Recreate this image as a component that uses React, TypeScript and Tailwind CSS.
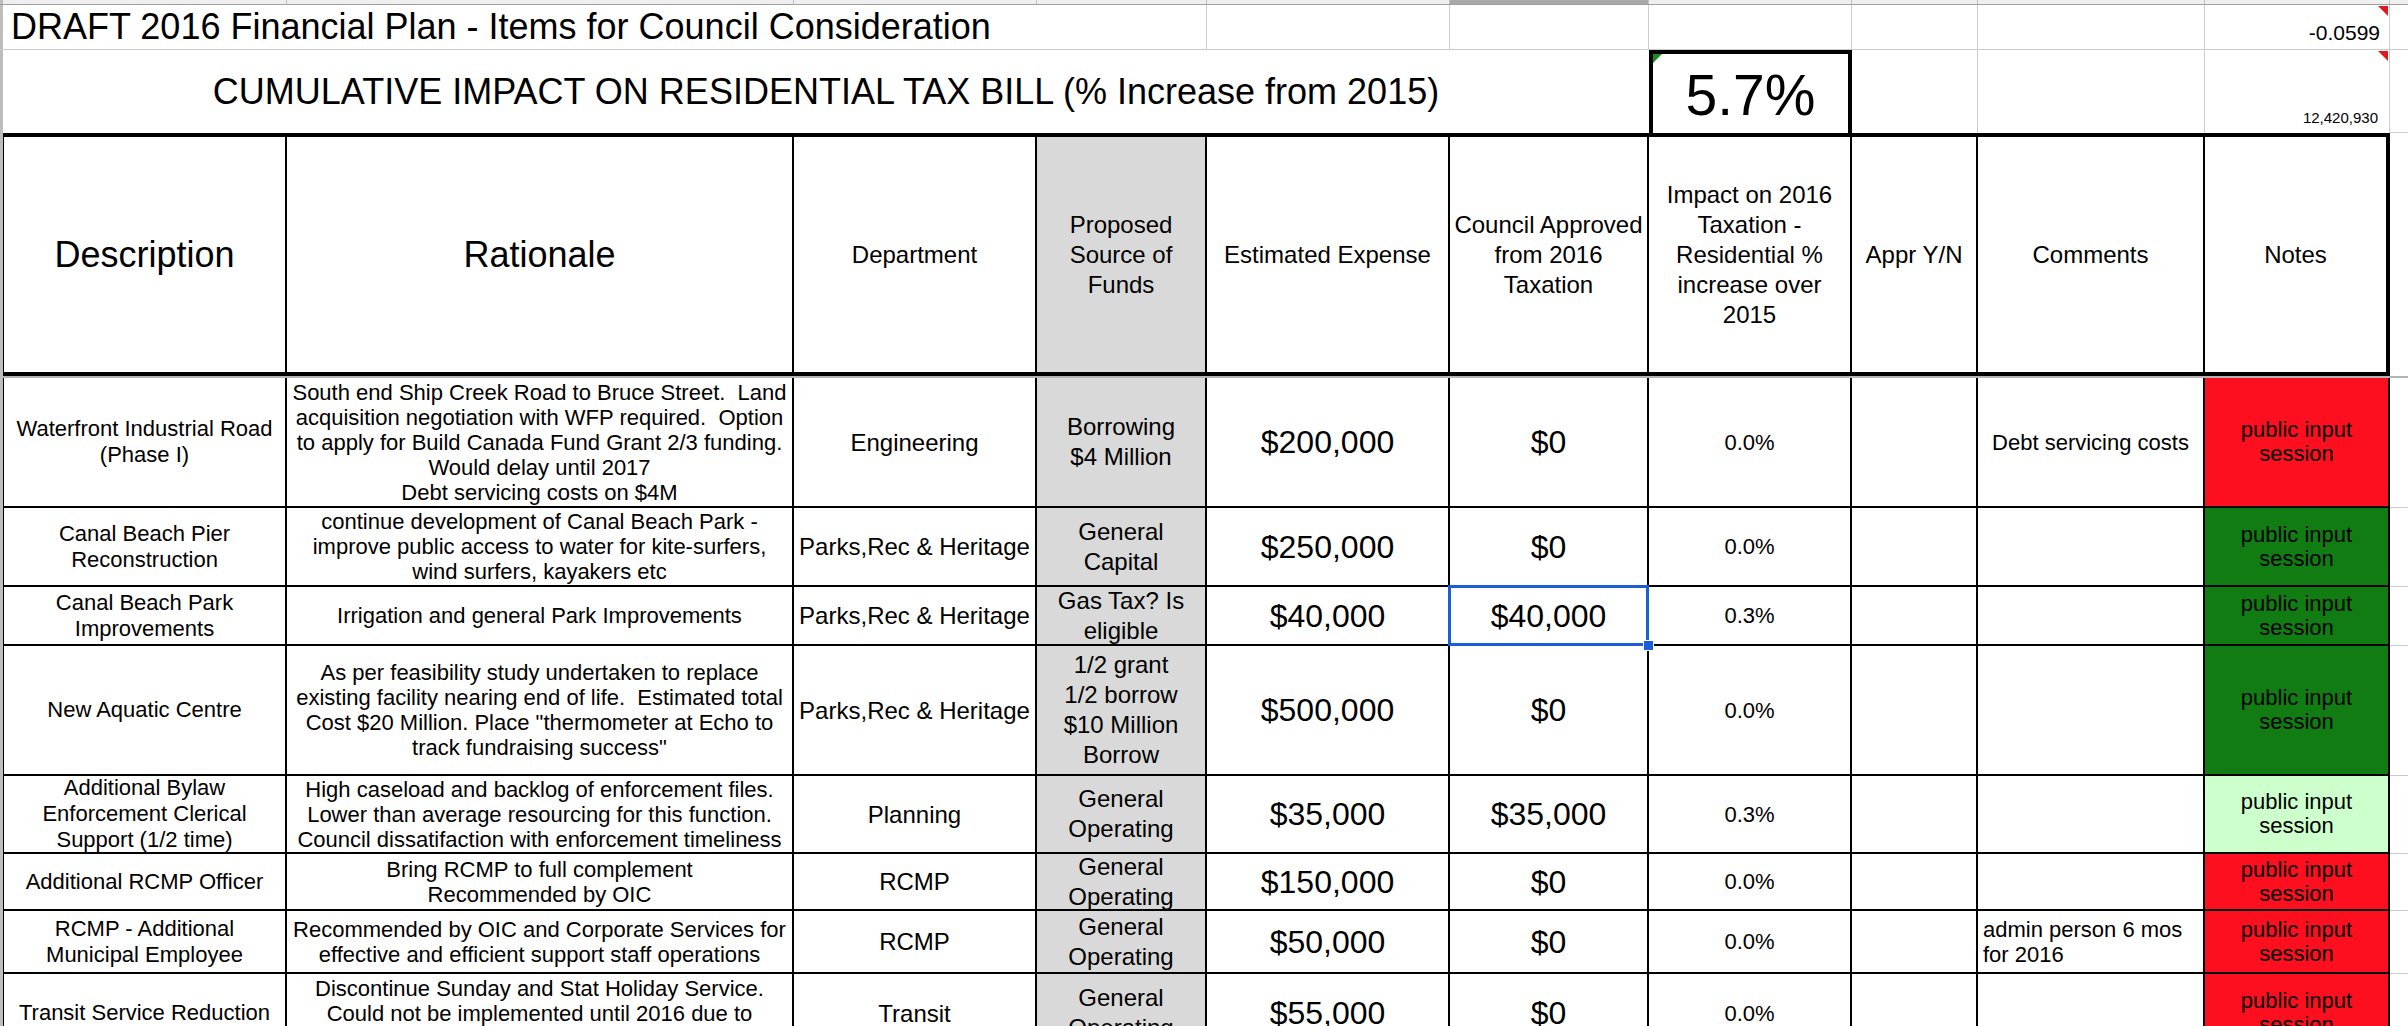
import React from 'react';
import clsx from 'clsx';

// column widths, left to right (A..J), then the narrow column cut off at the right edge
const cols = [
  'w-[284px]',
  'w-[507px]',
  'w-[243px]',
  'w-[170px]',
  'w-[243px]',
  'w-[199px]',
  'w-[203px]',
  'w-[126px]',
  'w-[227px]',
  'w-[185px]',
];

type Row = {
  h: string;
  desc: string[];
  rat: string[];
  dept: string[];
  src: string[];
  est: string;
  council: string;
  impact: string;
  comments?: string[];
  commentsLeft?: boolean;
  note: string;
  selected?: boolean;
};

const RED = 'bg-[#fd0f1f]';
const GREEN = 'bg-[#117c12]';
const LIGHT = 'bg-[#ccffcc]';

const rows: Row[] = [
  {
    h: 'h-[130px]',
    desc: ['Waterfront Industrial Road', '(Phase I)'],
    rat: [
      'South end Ship Creek Road to Bruce Street.  Land',
      'acquisition negotiation with WFP required.  Option',
      'to apply for Build Canada Fund Grant 2/3 funding.',
      'Would delay until 2017',
      'Debt servicing costs on $4M',
    ],
    dept: ['Engineering'],
    src: ['Borrowing', '$4 Million'],
    est: '$200,000',
    council: '$0',
    impact: '0.0%',
    comments: ['Debt servicing costs'],
    note: RED,
  },
  {
    h: 'h-[79px]',
    desc: ['Canal Beach Pier', 'Reconstruction'],
    rat: [
      'continue development of Canal Beach Park -',
      'improve public access to water for kite-surfers,',
      'wind surfers, kayakers etc',
    ],
    dept: ['Parks,Rec & Heritage'],
    src: ['General', 'Capital'],
    est: '$250,000',
    council: '$0',
    impact: '0.0%',
    note: GREEN,
  },
  {
    h: 'h-[59px]',
    desc: ['Canal Beach Park', 'Improvements'],
    rat: ['Irrigation and general Park Improvements'],
    dept: ['Parks,Rec & Heritage'],
    src: ['Gas Tax? Is', 'eligible'],
    est: '$40,000',
    council: '$40,000',
    impact: '0.3%',
    note: GREEN,
    selected: true,
  },
  {
    h: 'h-[130px]',
    desc: ['New Aquatic Centre'],
    rat: [
      'As per feasibility study undertaken to replace',
      'existing facility nearing end of life.  Estimated total',
      'Cost $20 Million. Place "thermometer at Echo to',
      'track fundraising success"',
    ],
    dept: ['Parks,Rec & Heritage'],
    src: ['1/2 grant', '1/2 borrow', '$10 Million', 'Borrow'],
    est: '$500,000',
    council: '$0',
    impact: '0.0%',
    note: GREEN,
  },
  {
    h: 'h-[78px]',
    desc: ['Additional Bylaw', 'Enforcement Clerical', 'Support (1/2 time)'],
    rat: [
      'High caseload and backlog of enforcement files.',
      'Lower than average resourcing for this function.',
      'Council dissatifaction with enforcement timeliness',
    ],
    dept: ['Planning'],
    src: ['General', 'Operating'],
    est: '$35,000',
    council: '$35,000',
    impact: '0.3%',
    note: LIGHT,
  },
  {
    h: 'h-[57px]',
    desc: ['Additional RCMP Officer'],
    rat: ['Bring RCMP to full complement', 'Recommended by OIC'],
    dept: ['RCMP'],
    src: ['General', 'Operating'],
    est: '$150,000',
    council: '$0',
    impact: '0.0%',
    note: RED,
  },
  {
    h: 'h-[63px]',
    desc: ['RCMP - Additional', 'Municipal Employee'],
    rat: [
      'Recommended by OIC and Corporate Services for',
      'effective and efficient support staff operations',
    ],
    dept: ['RCMP'],
    src: ['General', 'Operating'],
    est: '$50,000',
    council: '$0',
    impact: '0.0%',
    comments: ['admin person 6 mos', 'for 2016'],
    commentsLeft: true,
    note: RED,
  },
  {
    h: 'h-[80px]',
    desc: ['Transit Service Reduction'],
    rat: [
      'Discontinue Sunday and Stat Holiday Service.',
      'Could not be implemented until 2016 due to',
      '\u00a0',
    ],
    dept: ['Transit'],
    src: ['General', 'Operating'],
    est: '$55,000',
    council: '$0',
    impact: '0.0%',
    note: RED,
  },
];

const Lines: React.FC<{ lines: string[]; className?: string }> = ({ lines, className }) => (
  <div className={clsx('whitespace-pre', className)}>
    {lines.map((l, i) => (
      <div key={i}>{l}</div>
    ))}
  </div>
);

const Gutter: React.FC = () => <div className="w-[3px] shrink-0 self-stretch bg-[#bdbdbd]" />;

const Cell: React.FC<{
  w: string;
  className?: string;
  inner?: string;
  children?: React.ReactNode;
}> = ({ w, className, inner, children }) => (
  <div className={clsx('relative h-full shrink-0 border-black', w, className)}>
    <div className={clsx('flex h-full w-full items-center justify-center overflow-hidden text-center', inner)}>
      {children}
    </div>
  </div>
);

const RedMark: React.FC = () => (
  <span className="absolute right-[1px] top-[1px] h-0 w-0 border-l-[10px] border-t-[10px] border-l-transparent border-t-[#e3161c]" />
);

const App: React.FC = () => {
  return (
    <div className="h-[1026px] w-[2408px] overflow-hidden bg-white font-['Liberation_Sans',Arial,sans-serif] text-black">
      {/* column header strip, mostly scrolled off */}
      <div className="flex h-[5px] border-b border-[#9f9f9f] bg-[#efefef]">
        <div className="w-[3px] shrink-0 bg-[#bdbdbd]" />
        {cols.map((w, i) => (
          <div key={i} className={clsx(w, 'shrink-0 border-r border-[#c2c2c2]', i === 5 && 'bg-[#a8a8a8]')} />
        ))}
        <div className="flex-1" />
      </div>

      {/* title row */}
      <div className="flex h-[45px] border-b border-[#cccccc]">
        <Gutter />
        <div className="flex w-[1034px] shrink-0 items-center whitespace-nowrap pl-[8px] text-[36px]">
          DRAFT 2016 Financial Plan - Items for Council Consideration
        </div>
        {cols.slice(3, 9).map((w, i) => (
          <div key={i} className={clsx(w, 'shrink-0 border-r border-[#cccccc]')} />
        ))}
        <div className="relative flex w-[185px] shrink-0 items-end justify-end border-r border-[#cccccc] pb-[6px] pr-[9px] text-[21px] leading-none">
          -0.0599
          <RedMark />
        </div>
        <div className="flex-1" />
      </div>

      {/* cumulative impact row */}
      <div className="flex h-[83px]">
        <Gutter />
        <div className="flex w-[1646px] shrink-0 items-center justify-center whitespace-nowrap text-[36px]">
          CUMULATIVE IMPACT ON RESIDENTIAL TAX BILL (% Increase from 2015)
        </div>
        <div className="relative flex w-[203px] shrink-0 items-center justify-center border-x-4 border-t-4 border-black pt-[4px] text-[57px] leading-none">
          5.7%
          <span className="absolute left-0 top-0 h-0 w-0 border-r-[9px] border-t-[9px] border-r-transparent border-t-[#1c8c1c]" />
        </div>
        <div className="w-[126px] shrink-0 border-r border-[#cccccc]" />
        <div className="w-[227px] shrink-0 border-r border-[#cccccc]" />
        <div className="relative flex w-[185px] shrink-0 items-end justify-end border-r border-[#cccccc] pb-[8px] pr-[11px] text-[15px] leading-none">
          12,420,930
          <RedMark />
        </div>
        <div className="flex-1 border-b border-[#cccccc]" />
      </div>

      {/* table header */}
      <div className="flex h-[243px]">
        <Gutter />
        <Cell w={cols[0]} className="border-y-4 border-l border-r-2 text-[36px]">
          Description
        </Cell>
        <Cell w={cols[1]} className="border-y-4 border-r-2 text-[36px]">
          Rationale
        </Cell>
        <Cell w={cols[2]} className="border-y-4 border-r-2 text-[24px]">
          Department
        </Cell>
        <Cell w={cols[3]} className="border-y-4 border-r-2 bg-[#d9d9d9] text-[24px] leading-[30px]">
          <Lines lines={['Proposed', 'Source of', 'Funds']} />
        </Cell>
        <Cell w={cols[4]} className="border-y-4 border-r-2 text-[24px]">
          Estimated Expense
        </Cell>
        <Cell w={cols[5]} className="border-y-4 border-r-2 text-[24px] leading-[30px]">
          <Lines lines={['Council Approved', 'from 2016', 'Taxation']} />
        </Cell>
        <Cell w={cols[6]} className="border-y-4 border-r-2 text-[24px] leading-[30px]">
          <Lines lines={['Impact on 2016', 'Taxation -', 'Residential %', 'increase over', '2015']} />
        </Cell>
        <Cell w={cols[7]} className="border-y-4 border-r-2 text-[24px]">
          Appr Y/N
        </Cell>
        <Cell w={cols[8]} className="border-y-4 border-r-2 text-[24px]">
          Comments
        </Cell>
        <Cell w={cols[9]} className="border-y-4 border-r-4 text-[24px]">
          Notes
        </Cell>
        <div className="flex-1" />
      </div>
      <div className="flex h-[2px]">
        <Gutter />
        <div className="flex-1 bg-[#b4b4b4]" />
      </div>

      {/* data rows */}
      {rows.map((r, i) => (
        <div key={i} className={clsx('flex', r.h)}>
          <Gutter />
          <Cell w={cols[0]} className="border-b-2 border-l border-r-2 text-[22px] leading-[26px]">
            <Lines lines={r.desc} />
          </Cell>
          <Cell w={cols[1]} className="border-b-2 border-r-2 text-[22px] leading-[25px]">
            <Lines lines={r.rat} />
          </Cell>
          <Cell w={cols[2]} className="border-b-2 border-r-2 text-[24px] leading-[29px]">
            <Lines lines={r.dept} />
          </Cell>
          <Cell w={cols[3]} className="border-b-2 border-r-2 bg-[#d9d9d9] text-[24px] leading-[30px]">
            <Lines lines={r.src} />
          </Cell>
          <Cell w={cols[4]} className="border-b-2 border-r-2 text-[32px]">
            {r.est}
          </Cell>
          <Cell w={cols[5]} className="border-b-2 border-r-2 text-[32px]">
            {r.council}
            {r.selected && (
              <>
                <span className="absolute -bottom-[2px] -left-[2px] -right-[2px] -top-[2px] z-10 border-[3px] border-[#1a5fd6]" />
                <span className="absolute -bottom-[7px] -right-[7px] z-20 h-[11px] w-[11px] border border-white bg-[#1a5fd6]" />
              </>
            )}
          </Cell>
          <Cell w={cols[6]} className="border-b-2 border-r-2 text-[22px]">
            {r.impact}
          </Cell>
          <Cell w={cols[7]} className="border-b-2 border-r-2" />
          <Cell
            w={cols[8]}
            className="border-b-2 border-r-2 text-[22px] leading-[25px]"
            inner={r.commentsLeft ? 'justify-start pl-[5px] text-left' : undefined}
          >
            {r.comments && <Lines lines={r.comments} />}
          </Cell>
          <Cell w={cols[9]} className={clsx('border-b-2 border-r-2 text-[22px] leading-[24px]', r.note)}>
            <Lines lines={['public input', 'session']} />
          </Cell>
          <div className="flex-1 border-b border-[#cccccc]" />
        </div>
      ))}
    </div>
  );
};

export default App;
